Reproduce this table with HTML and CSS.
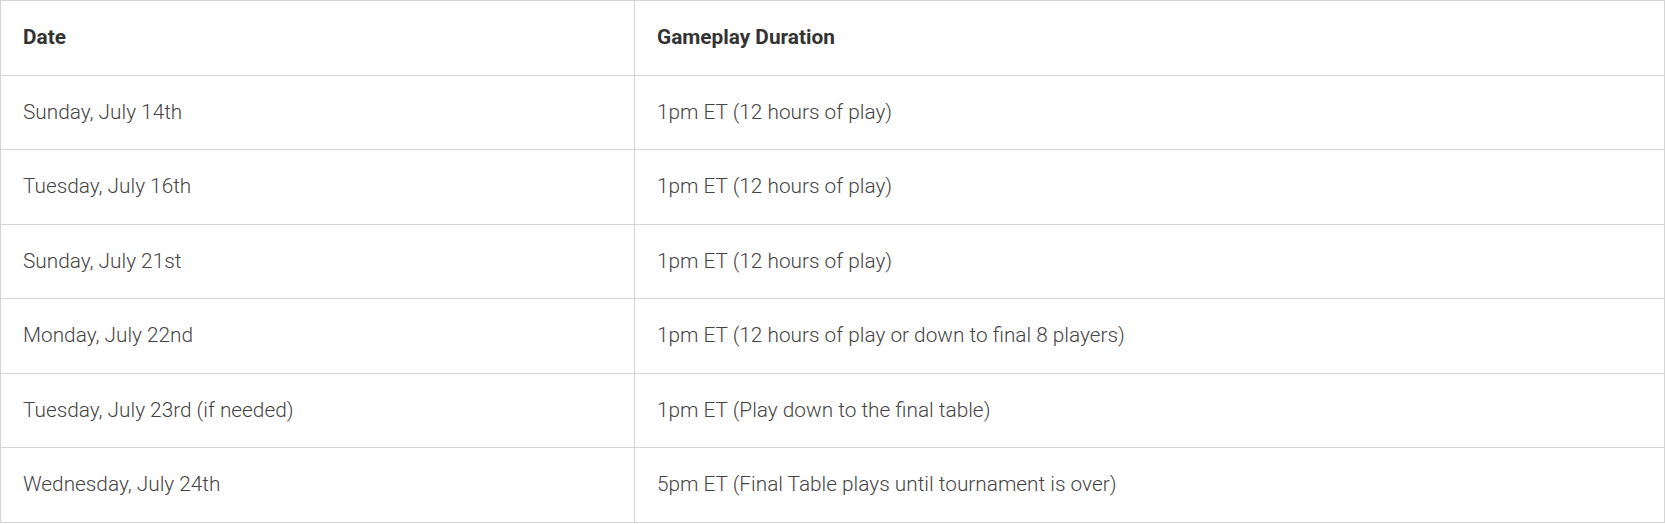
FILE: index.html
```html
<!DOCTYPE html>
<html lang="en">
<head>
<meta charset="utf-8">
<title>Schedule</title>
<link rel="stylesheet" href="styles.css">
</head>
<body>
<table class="schedule">
  <thead>
    <tr><th class="col-date">Date</th><th>Gameplay Duration</th></tr>
  </thead>
  <tbody>
    <tr><td>Sunday, July 14th</td><td>1pm ET (12 hours of play)</td></tr>
    <tr><td>Tuesday, July 16th</td><td>1pm ET (12 hours of play)</td></tr>
    <tr><td>Sunday, July 21st</td><td>1pm ET (12 hours of play)</td></tr>
    <tr><td>Monday, July 22nd</td><td>1pm ET (12 hours of play or down to final 8 players)</td></tr>
    <tr><td>Tuesday, July 23rd (if needed)</td><td>1pm ET (Play down to the final table)</td></tr>
    <tr><td>Wednesday, July 24th</td><td>5pm ET (Final Table plays until tournament is over)</td></tr>
  </tbody>
</table>
</body>
</html>
```
FILE: styles.css
```css
html, body {
  margin: 0;
  padding: 0;
  background: #fff;
}
body {
  font-family: Roboto, "Liberation Sans", sans-serif;
}
.schedule {
  width: 1665px;
  border-collapse: collapse;
  table-layout: fixed;
}
.schedule th,
.schedule td {
  border: 1px solid #d5d5d5;
  padding: 22px 22px;
  line-height: 29.5px;
  font-size: 20.8px;
  text-align: left;
  vertical-align: middle;
}
.schedule th {
  font-weight: 700;
  color: #333;
}
.schedule td {
  font-weight: 300;
  color: #444;
}
.col-date {
  width: 589px;
}
```
